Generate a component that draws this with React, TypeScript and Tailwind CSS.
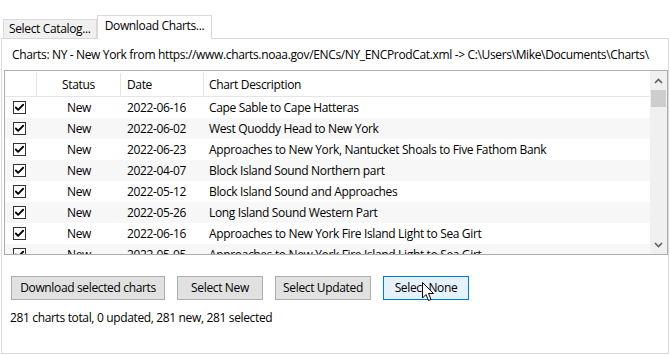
import { Check } from "lucide-react";

type Row = { status: string; date: string; desc: string };

const rows: Row[] = [
  { status: "New", date: "2022-06-16", desc: "Cape Sable to Cape Hatteras" },
  { status: "New", date: "2022-06-02", desc: "West Quoddy Head to New York" },
  { status: "New", date: "2022-06-23", desc: "Approaches to New York, Nantucket Shoals to Five Fathom Bank" },
  { status: "New", date: "2022-04-07", desc: "Block Island Sound Northern part" },
  { status: "New", date: "2022-05-12", desc: "Block Island Sound and Approaches" },
  { status: "New", date: "2022-05-26", desc: "Long Island Sound Western Part" },
  { status: "New", date: "2022-06-16", desc: "Approaches to New York Fire Island Light to Sea Girt" },
  { status: "New", date: "2022-05-05", desc: "Approaches to New York Fire Island Light to Sea Girt" },
];

function CheckBox() {
  return (
    <div className="flex h-[13px] w-[13px] items-center justify-center border border-[#333] bg-white">
      <Check size={11} strokeWidth={4} className="text-black" />
    </div>
  );
}

function WinButton({ label, hover = false, w }: { label: string; hover?: boolean; w: string }) {
  return (
    <div
      className={`flex h-[24px] items-center justify-center border ${w} ${
        hover ? "border-[#0078d7] bg-[#e5f1fb]" : "border-[#adadad] bg-[#e1e1e1]"
      }`}
    >
      {label}
    </div>
  );
}

function Cursor() {
  return (
    <svg className="absolute left-[422px] top-[282px]" width="13" height="20" viewBox="0 0 13 20">
      <path d="M0.5 0.5 L0.5 16 L4 12.5 L6.5 18.5 L9 17.5 L6.5 11.5 L11.5 11.5 Z" fill="white" stroke="black" strokeWidth="1" />
    </svg>
  );
}

export default function App() {
  return (
    <div
      className="relative h-[355px] w-[670px] overflow-hidden bg-white text-[12px] tracking-[-0.35px] text-black"
      style={{ fontFamily: '"Segoe UI", "Open Sans", "Noto Sans", sans-serif' }}
    >
      <div className="flex h-[38px] items-end pl-[3px]">
        <div className="flex h-[19px] items-center border border-b-0 border-[#d9d9d9] bg-[#f0f0f0] px-[5px] leading-none">
          Select Catalog...
        </div>
        <div className="relative z-10 -mb-px flex h-[24px] items-start border border-b-0 border-[#d9d9d9] bg-white px-[7px] pt-[1px]">
          Download Charts...
        </div>
      </div>

      <div className="ml-[1px] flex h-[316px] w-[668px] flex-col border border-[#d9d9d9]">
        <div className="mt-[7px] ml-[10px] h-[17px] whitespace-nowrap leading-[17px]">
          {"Charts: NY - New York from https://www.charts.noaa.gov/ENCs/NY_ENCProdCat.xml -> C:\\Users\\Mike\\Documents\\Charts\\"}
        </div>

        <div className="mt-[7px] ml-[2px] flex h-[185px] w-[664px] border border-[#adadad]">
          <div className="flex min-w-0 flex-1 flex-col overflow-hidden">
            <div className="flex h-[26px] shrink-0 border-b border-[#e5e5e5] pt-[2px]">
              <div className="w-[32px] border-r border-[#e5e5e5]" />
              <div className="flex w-[84px] items-center justify-center border-r border-[#e5e5e5]">Status</div>
              <div className="flex w-[83px] items-center border-r border-[#e5e5e5] pl-[6px]">Date</div>
              <div className="flex flex-1 items-center pl-[5px]">Chart Description</div>
            </div>
            {rows.map((r, i) => (
              <div
                key={i}
                className={`flex h-[21px] shrink-0 items-center ${i % 2 === 1 ? "bg-[#f7f7f7]" : "bg-white"}`}
              >
                <div className="flex w-[32px] justify-center pr-[3px]">
                  <CheckBox />
                </div>
                <div className="w-[84px] text-center">{r.status}</div>
                <div className="w-[83px] pl-[6px]">{r.date}</div>
                <div className="flex-1 whitespace-nowrap pl-[5px]">{r.desc}</div>
              </div>
            ))}
          </div>
          <div className="flex w-[17px] shrink-0 flex-col bg-[#f0f0f0]">
            <div className="flex h-[19px] items-center justify-center">
              <svg width="9" height="6" viewBox="0 0 9 6">
                <path d="M1 5 L4.5 1.5 L8 5" fill="none" stroke="#606060" strokeWidth="1.6" />
              </svg>
            </div>
            <div className="mx-[1px] h-[17px] bg-[#cdcdcd]" />
            <div className="flex-1" />
            <div className="flex h-[19px] items-center justify-center">
              <svg width="9" height="6" viewBox="0 0 9 6">
                <path d="M1 1 L4.5 4.5 L8 1" fill="none" stroke="#606060" strokeWidth="1.6" />
              </svg>
            </div>
          </div>
        </div>

        <div className="mt-[21px] ml-[9px] flex gap-[12px]">
          <WinButton label="Download selected charts" w="w-[154px]" />
          <WinButton label="Select New" w="w-[86px]" />
          <WinButton label="Select Updated" w="w-[96px]" />
          <WinButton label="Select None" w="w-[86px]" hover />
        </div>

        <div className="mt-[9px] ml-[8px] leading-[17px]">281 charts total, 0 updated, 281 new, 281 selected</div>
      </div>

      <Cursor />
    </div>
  );
}
